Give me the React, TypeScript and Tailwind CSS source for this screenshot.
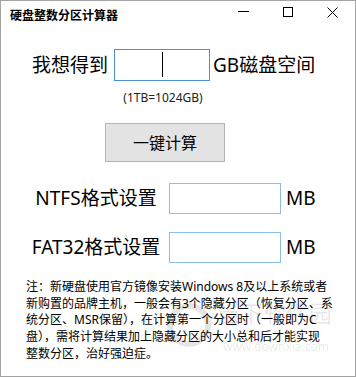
const font = "font-['Noto_Sans','Noto_Sans_CJK_SC',sans-serif]";

const App = () => {
    return (
        <div className={`relative w-[356px] h-[377px] bg-white border border-[#a3a3a3] text-black overflow-hidden ${font}`}>
            {/* title bar */}
            <div className="h-[29px] flex items-center pl-[9px] relative">
                <span className="text-[12px] font-bold leading-none">硬盘整数分区计算器</span>
                <div className="absolute left-[237px] top-[10px] w-[11px] h-px bg-black" />
                <div className="absolute left-[282px] top-[6px] w-[10px] h-[10px] border border-black" />
                <svg className="absolute left-[326px] top-[6px]" width="11" height="11" viewBox="0 0 11 11">
                    <path d="M0.5 0.5 L10.5 10.5 M10.5 0.5 L0.5 10.5" stroke="black" strokeWidth="1" />
                </svg>
            </div>

            {/* size row */}
            <div className="mt-[19px] flex items-center pl-[31px] h-[32px]">
                <span className="text-[19px] leading-none w-[82px]">我想得到</span>
                <div className="w-[96px] h-[32px] border border-[#4a90d9] relative">
                    <div className="absolute left-[47px] top-[2px] w-px h-[25px] bg-black" />
                </div>
                <span className="text-[19px] leading-none ml-[3px]">GB磁盘空间</span>
            </div>
            <div className="mt-[9px] ml-[107px] w-[110px] text-center text-[12px] leading-[15px] text-[#222]">(1TB=1024GB)</div>

            <div className="mt-[18px] ml-[104px]">
                <button className={`w-[120px] h-[39px] bg-[#e3e3e3] border border-[#b4b4b4] text-[16px] ${font}`}>一键计算</button>
            </div>

            {/* partition rows */}
            <div className="mt-[21px] flex items-center h-[31px]">
                <span className="w-[140px] ml-[25px] text-center text-[19px] leading-none">NTFS格式设置</span>
                <div className="ml-[3px] w-[112px] h-[31px] border border-[#8cbdec]" />
                <span className="ml-[5px] text-[19px] leading-none">MB</span>
            </div>
            <div className="mt-[18px] flex items-center h-[31px]">
                <span className="w-[140px] ml-[25px] text-center text-[19px] leading-none">FAT32格式设置</span>
                <div className="ml-[3px] w-[112px] h-[31px] border border-[#8cbdec]" />
                <span className="ml-[5px] text-[19px] leading-none">MB</span>
            </div>

            {/* note */}
            <div className="mt-[16px] ml-[25px] text-[12px] leading-[16.7px] whitespace-nowrap">
                <div>注：新硬盘使用官方镜像安装Windows 8及以上系统或者</div>
                <div>新购置的品牌主机，一般会有3个隐藏分区（恢复分区、系</div>
                <div>统分区、MSR保留），在计算第一个分区时（一般即为C</div>
                <div>盘），需将计算结果加上隐藏分区的大小总和后才能实现</div>
                <div>整数分区，治好强迫症。</div>
            </div>

            {/* watermark */}
            <div className="absolute left-[166px] top-[302px] w-[44px] h-[44px] rounded-full border-[6px] border-black/10 pointer-events-none" />
            <div className="absolute left-[216px] top-[301px] text-[23px] leading-none text-black/10 pointer-events-none">当下软件园</div>
            <div className="absolute left-[222px] top-[340px] text-[12px] leading-none text-black/10 pointer-events-none">www.downxia.com</div>
        </div>
    );
};

export default App;
